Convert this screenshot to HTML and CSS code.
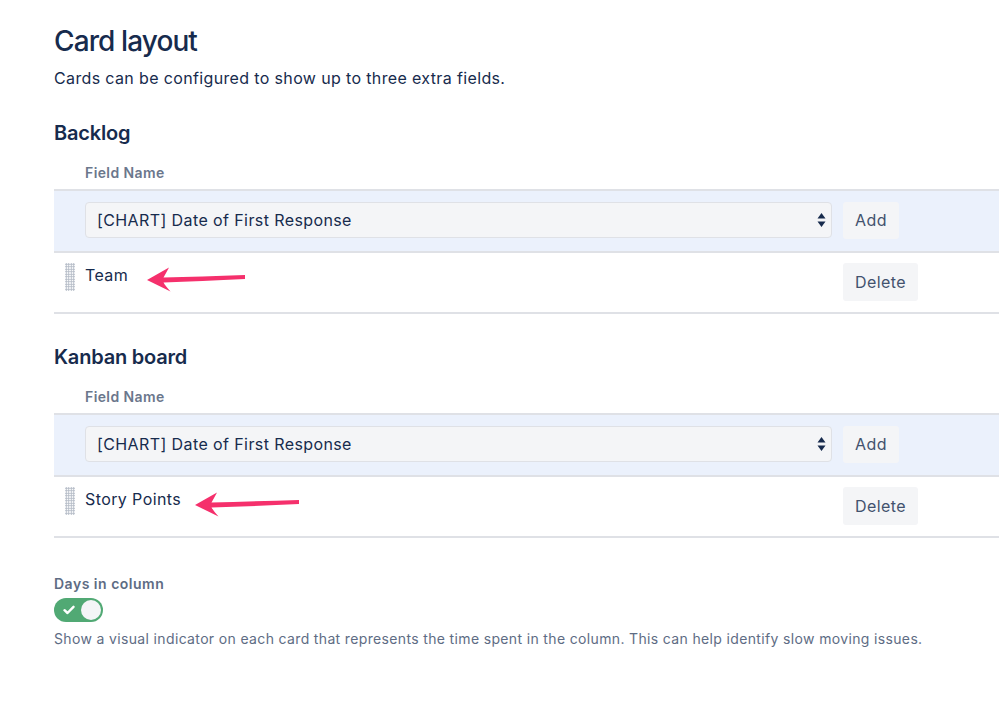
FILE: index.html
```html
<!DOCTYPE html>
<html lang="en">
<head>
  <meta charset="UTF-8" />
  <title>Card layout</title>
  <link rel="stylesheet" href="styles.css">
</head>
<body>
  <div class="page">
    <h1>Card layout</h1>
    <p class="subheading">Cards can be configured to show up to three extra fields.</p>

    <h2>Backlog</h2>
    <div class="field-label">Field Name</div>
    <div class="fields">
      <div class="row head">
        <div></div>
        <div class="select">
          <span>[CHART] Date of First Response</span>
          <svg class="caret" width="9" height="16" viewBox="0 0 9 16"><path d="M4.5 1 L8.5 6.5 H0.5 Z M4.5 15 L8.5 9.5 H0.5 Z" fill="#172b4d"/></svg>
        </div>
        <div><button class="btn">Add</button></div>
      </div>
      <div class="row item">
        <div><span class="handle"></span></div>
        <div class="name">Team</div>
        <div><button class="btn">Delete</button></div>
        <svg class="arrow arrow-team" width="100" height="28" viewBox="0 0 100 28"><path d="M1 15 L23 2.5 Q19.5 9 17.5 12.5 Q55 11.5 99 10 L99 14 Q55 16.3 17.5 17.5 Q19.5 21 24.5 26.5 Z" fill="#f5306c"/></svg>
      </div>
    </div>

    <h2>Kanban board</h2>
    <div class="field-label">Field Name</div>
    <div class="fields">
      <div class="row head">
        <div></div>
        <div class="select">
          <span>[CHART] Date of First Response</span>
          <svg class="caret" width="9" height="16" viewBox="0 0 9 16"><path d="M4.5 1 L8.5 6.5 H0.5 Z M4.5 15 L8.5 9.5 H0.5 Z" fill="#172b4d"/></svg>
        </div>
        <div><button class="btn">Add</button></div>
      </div>
      <div class="row item">
        <div><span class="handle"></span></div>
        <div class="name">Story Points</div>
        <div><button class="btn">Delete</button></div>
        <svg class="arrow arrow-points" width="106" height="28" viewBox="0 0 106 28"><path d="M1 15 L23 2.5 Q19.5 9 17.5 12.5 Q58 11.5 105 10 L105 14 Q58 16.3 17.5 17.5 Q19.5 21 24.5 26.5 Z" fill="#f5306c"/></svg>
      </div>
    </div>

    <div class="days-label">Days in column</div>
    <div class="toggle">
      <svg width="12" height="10" viewBox="0 0 12 10"><path d="M1.5 5.2 L4.5 8 L10.5 1.8" fill="none" stroke="#fff" stroke-width="2.4" stroke-linecap="round" stroke-linejoin="round"/></svg>
      <span class="knob"></span>
    </div>
    <p class="hint">Show a visual indicator on each card that represents the time spent in the column. This can help identify slow moving issues.</p>
  </div>
</body>
</html>
```

FILE: styles.css
```css
body {
  margin: 0;
  font-family: Inter, "Noto Sans", sans-serif;
  background: #fff;
  color: #172b4d;
}

.page {
  padding: 25px 0 40px 54px;
}

h1 {
  margin: 0;
  font-size: 28px;
  line-height: 32px;
  font-weight: 500;
  letter-spacing: -0.9px;
}

.subheading {
  margin: 9px 0 0;
  font-size: 16px;
  line-height: 24px;
  letter-spacing: 0.36px;
}

h2 {
  margin: 31px 0 0;
  font-size: 20px;
  line-height: 24px;
  font-weight: 600;
  letter-spacing: -0.2px;
}

.field-label {
  margin: 18px 0 0 31px;
  font-size: 14px;
  line-height: 20px;
  font-weight: 600;
  color: #6b778c;
  letter-spacing: 0.4px;
}

.fields {
  margin-top: 6px;
  border-top: 2px solid #dfe1e6;
}

.row {
  display: grid;
  grid-template-columns: 31px 747px auto;
  align-items: center;
  border-bottom: 2px solid #dfe1e6;
  position: relative;
}

.row > div:last-of-type {
  padding-left: 11px;
}

.row.head {
  background: #ebf1fc;
  height: 60px;
}

.row.item {
  height: 59px;
  align-items: start;
}

.select {
  height: 36px;
  box-sizing: border-box;
  border: 1px solid #dfe1e6;
  border-radius: 4px;
  background: #f4f5f7;
  display: flex;
  align-items: center;
  justify-content: space-between;
  padding: 0 5px 0 11px;
  font-size: 16px;
  letter-spacing: 0.4px;
  margin-top: -3px;
}

.caret {
  display: block;
}

.btn {
  font-family: inherit;
  font-size: 16px;
  letter-spacing: 0.4px;
  color: #42526e;
  background: #f4f5f7;
  border: none;
  border-radius: 3px;
  height: 37px;
  padding: 0 12px;
  cursor: pointer;
}

.row.item .btn {
  margin-top: 10px;
  height: 38px;
}

.row.head .btn {
  margin-top: -2px;
}

.name {
  font-size: 16px;
  line-height: 24px;
  letter-spacing: 0.4px;
  margin-top: 10px;
}

.handle {
  display: block;
  width: 10px;
  height: 28px;
  margin: 10px 0 0 11px;
  background-image: radial-gradient(circle, #b3bac5 0.9px, transparent 1.2px);
  background-size: 2.5px 2.5px;
}

.arrow {
  position: absolute;
}

.arrow-team {
  left: 92px;
  top: 12px;
}

.arrow-points {
  left: 140px;
  top: 13px;
}

.days-label {
  margin-top: 36px;
  font-size: 14px;
  line-height: 20px;
  font-weight: 600;
  color: #5e6c84;
  letter-spacing: 0.5px;
}

.toggle {
  margin-top: 4px;
  width: 49px;
  height: 24px;
  box-sizing: border-box;
  border-radius: 12px;
  background: #51a974;
  display: flex;
  align-items: center;
  justify-content: space-between;
  padding: 0 2px 0 9px;
}

.toggle svg {
  display: block;
}

.knob {
  width: 20px;
  height: 20px;
  border-radius: 50%;
  background: #f4f5f7;
}

.hint {
  margin: 7px 0 0;
  font-size: 14px;
  line-height: 20px;
  color: #5e6c84;
  letter-spacing: 0.35px;
}
```
